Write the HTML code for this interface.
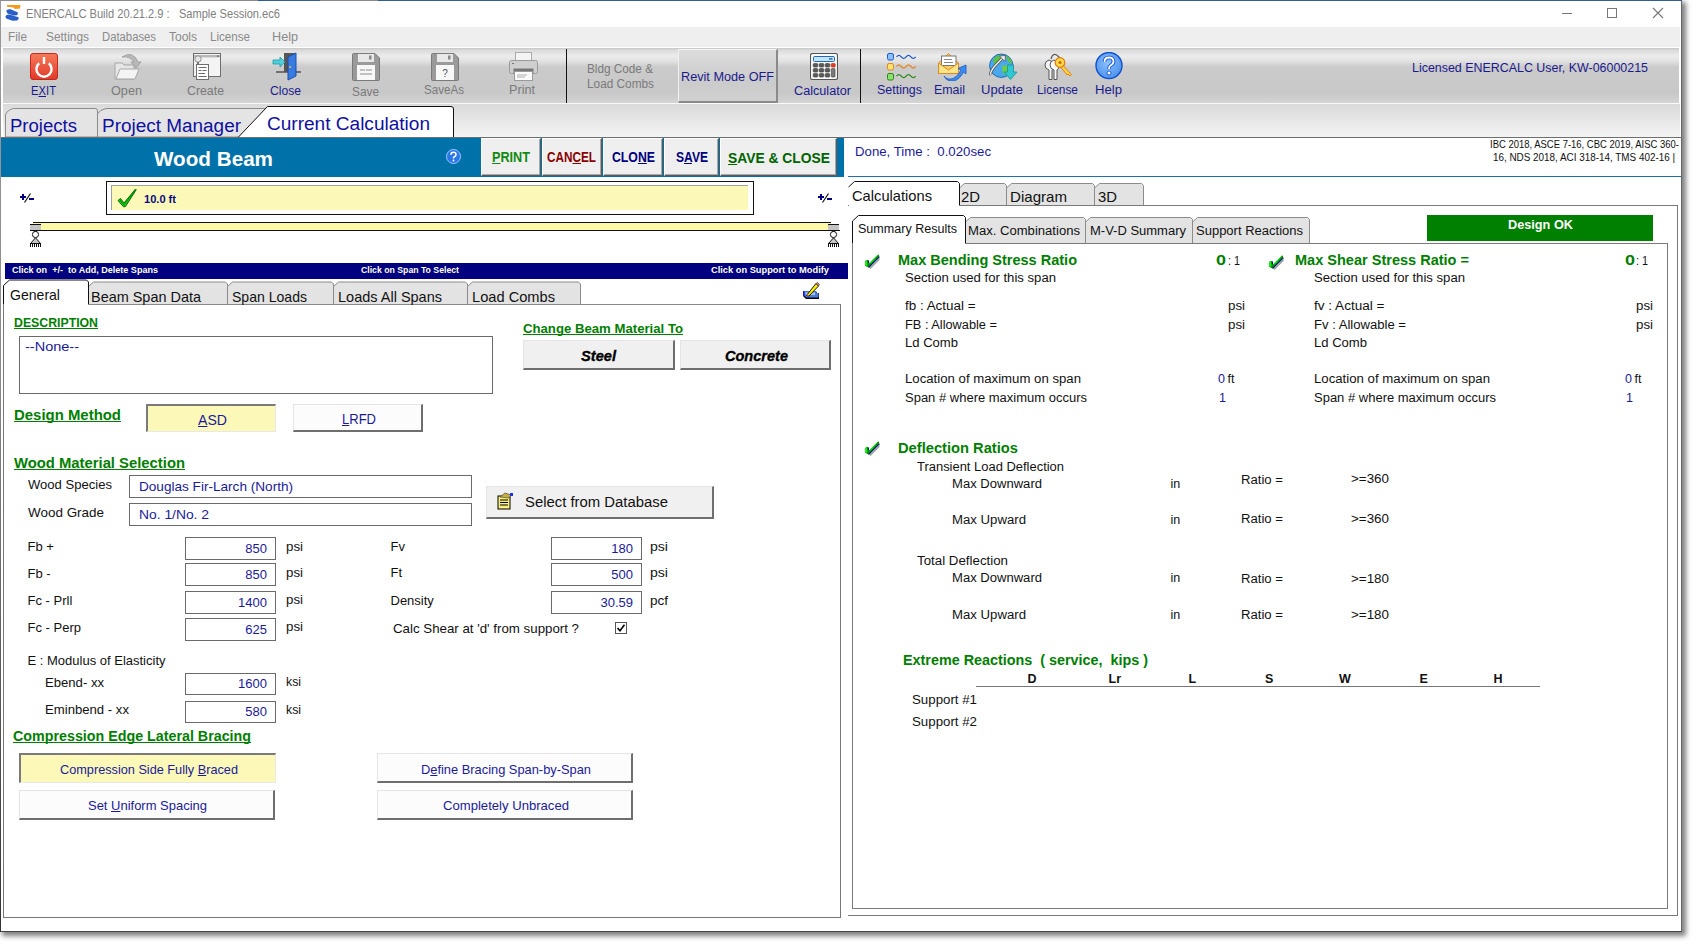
<!DOCTYPE html><html><head><meta charset="utf-8"><style>
html,body{margin:0;padding:0;width:1697px;height:948px;overflow:hidden;background:#fff;}
body{position:relative;font-family:"Liberation Sans", sans-serif;}
.t{position:absolute;white-space:pre;line-height:1;transform-origin:0 0;}
u{text-decoration:underline;text-decoration-skip-ink:none;}
</style></head><body>
<div style="position:absolute;left:0;top:0;width:1682px;height:932px;background:#fff;box-shadow:3px 3px 5px 1px rgba(0,0,0,0.5);"></div>
<div style="position:absolute;left:0;top:0;width:1681px;height:931px;border-right:1px solid #666;border-bottom:1px solid #444;"></div>
<div style="position:absolute;left:0;top:0;width:1px;height:932px;background:linear-gradient(#9a9a9a,#8a8a8a 40%,#333);"></div>
<div style="position:absolute;left:0px;top:0px;width:258px;height:1px;background:#8c8c8c;"></div>
<div style="position:absolute;left:258px;top:0px;width:62px;height:1px;background:#2d5f96;"></div>
<div style="position:absolute;left:320px;top:0px;width:58px;height:1px;background:#8c8c8c;"></div>
<div style="position:absolute;left:378px;top:0px;width:1304px;height:1px;background:#2d5f96;"></div>
<svg style="position:absolute;left:0;top:0" width="30" height="27" viewBox="0 0 30 27"><path d="M7 5 L20.5 5 L20 8.5 L15 9 L13.5 7.5 L7 6.8 Z" fill="#f49a18"/><path d="M6.2 11 Q7 8.6 10.5 9.3 L17.6 12.2 Q18.6 14.2 16.8 15.2 L13.5 15.6 L7.5 13.5 Z" fill="#2a5ec8"/><path d="M5.4 16.5 Q6.2 14.2 9.2 14.5 L18.6 17.2 Q19.2 19.6 17.2 20.6 L12.5 20.8 L6.2 18.6 Z" fill="#2a5ec8"/></svg>
<div style="position:absolute;left:1562px;top:13px;width:10px;height:1px;background:#777;"></div>
<div style="position:absolute;left:1607px;top:8px;width:9px;height:9px;border:1px solid #777;box-sizing:border-box;width:10px;height:10px;"></div>
<svg style="position:absolute;left:1652px;top:7px" width="12" height="12" viewBox="0 0 12 12"><path d="M1 1L11 11M11 1L1 11" stroke="#777" stroke-width="1.1"/></svg>
<div style="position:absolute;left:1px;top:27px;width:1679px;height:20px;background:#efefef;"></div>
<div style="position:absolute;left:3px;top:48px;width:1676px;height:55px;background:linear-gradient(#c6c6c6 0px,#dadada 2px,#ececec 8px,#e2e2e2 13px,#cbcbcb 19px,#c8c8c8 45px,#cecece 50px,#d4d4d4 55px);"></div>
<div style="position:absolute;left:3px;top:103px;width:1677px;height:1px;background:#fafafa;"></div>
<div style="position:absolute;left:3px;top:104px;width:1677px;height:33px;background:linear-gradient(#dadada,#f4f4f4);"></div>
<svg style="position:absolute;left:30px;top:53px" width="28" height="27" viewBox="0 0 28 27"><defs><linearGradient id="gx" x1="0" y1="0" x2="0" y2="1"><stop offset="0" stop-color="#f57a5a"/><stop offset="1" stop-color="#e03a2a"/></linearGradient></defs><rect x="0.5" y="0.5" width="27" height="26" rx="2.5" fill="url(#gx)" stroke="#c8281c"/><path d="M9.2 10.2 A7.6 7.6 0 1 0 18.8 10.2" fill="none" stroke="#fff" stroke-width="2.4"/><rect x="12.8" y="4" width="2.4" height="7" fill="#fff"/></svg>
<svg style="position:absolute;left:113px;top:52px" width="32" height="30" viewBox="0 0 32 30"><path d="M2 11 L9 11 L11 13 L21 13 L21 27 L2 27Z" fill="#e6e6e6" stroke="#a8a8a8"/><path d="M3 27 L7 17 L26 17 L22 27Z" fill="#f4f4f4" stroke="#a8a8a8"/><path d="M9 5 Q20 -2 25 10 L28 10 L23 16 L18 10 L21 10 Q17 4 9 5Z" fill="#b8b8b8" stroke="#999" stroke-width="0.8"/></svg>
<svg style="position:absolute;left:193px;top:53px" width="29" height="28" viewBox="0 0 29 28"><rect x="0.5" y="0.5" width="27" height="23" fill="#f4f4f4" stroke="#6e6e6e"/><rect x="1" y="2" width="26" height="2.4" fill="#b8b8b8"/><rect x="24" y="2.5" width="1.5" height="1.3" fill="#555"/><circle cx="5" cy="6" r="3.2" fill="#e6e6e6" stroke="#8a8a8a" stroke-width="0.9"/><rect x="4" y="9" width="2" height="2.5" fill="#777"/><rect x="3.5" y="11.5" width="12" height="15" fill="#fff" stroke="#6e6e6e"/><path d="M5.5 14.5h8M5.5 17.5h3M9.5 17.5h4M5.5 20.5h6.5M5.5 23.5h8" stroke="#6a6a6a" stroke-width="1"/></svg>
<svg style="position:absolute;left:272px;top:52px" width="30" height="30" viewBox="0 0 30 30"><path d="M4 20 L29 20" stroke="#333" stroke-width="1.2"/><rect x="12" y="1" width="12" height="19" fill="#555"/><path d="M16 5 L24 1 L24 24 L16 28Z" fill="#3a7be0" stroke="#1a4fb0" stroke-width="1"/><rect x="17.5" y="14" width="1.3" height="2" fill="#ffd040"/><path d="M1 8 L8 8 L8 5 L13 10 L8 15 L8 12 L1 12Z" fill="#4fd0d8" stroke="#1a9aa8" stroke-width="0.8"/></svg>
<svg style="position:absolute;left:352px;top:53px" width="28" height="28" viewBox="0 0 28 28"><path d="M0.5 1.5 Q0.5 0.5 1.5 0.5 L23 0.5 L27.5 5 L27.5 26.5 Q27.5 27.5 26.5 27.5 L1.5 27.5 Q0.5 27.5 0.5 26.5Z" fill="#9a9a9a" stroke="#7a7a7a"/><rect x="6" y="1" width="16" height="8" fill="#e8e8e8"/><rect x="17" y="2.5" width="2.5" height="4" fill="#888"/><rect x="5" y="12" width="18" height="15" fill="#f8f8f8"/><path d="M8 17h5M14 17h6M8 21h12" stroke="#8a8a8a" stroke-width="1"/></svg>
<svg style="position:absolute;left:431px;top:53px" width="28" height="28" viewBox="0 0 28 28"><path d="M0.5 1.5 Q0.5 0.5 1.5 0.5 L23 0.5 L27.5 5 L27.5 26.5 Q27.5 27.5 26.5 27.5 L1.5 27.5 Q0.5 27.5 0.5 26.5Z" fill="#9a9a9a" stroke="#7a7a7a"/><rect x="6" y="1" width="16" height="8" fill="#e8e8e8"/><rect x="17" y="2.5" width="2.5" height="4" fill="#888"/><rect x="5" y="12" width="18" height="15" fill="#f8f8f8"/><text x="14" y="24" font-size="10" text-anchor="middle" fill="#555" font-family="Liberation Sans">?</text></svg>
<svg style="position:absolute;left:509px;top:52px" width="29" height="29" viewBox="0 0 29 29"><rect x="6.5" y="0.5" width="16" height="9" fill="#f4f4f4" stroke="#aaa"/><rect x="0.5" y="8.5" width="28" height="13" rx="2" fill="#cfcfcf" stroke="#9a9a9a"/><rect x="3" y="11" width="2" height="1" fill="#777"/><rect x="4.5" y="16.5" width="20" height="5" fill="#777" /><rect x="5.5" y="19.5" width="18" height="9" fill="#fafafa" stroke="#999"/><path d="M8 23h10M8 25h8" stroke="#999" stroke-width="0.8"/></svg>
<div style="position:absolute;left:566px;top:49px;width:1px;height:54px;background:#111;"></div>
<div style="position:absolute;left:678px;top:49px;width:100px;height:54px;box-sizing:border-box;background:linear-gradient(#dcdcdc,#cbcbcb 60%,#d0d0d0);border:1px solid #9a9a9a;border-top-color:#f4f4f4;border-left-color:#f0f0f0;border-right:2px solid #8a8a8a;border-bottom:2px solid #8a8a8a;"></div>
<svg style="position:absolute;left:810px;top:53px" width="28" height="28" viewBox="0 0 28 28"><rect x="0.5" y="0.5" width="27" height="26" rx="2" fill="#fafafa" stroke="#555" stroke-width="1.1"/><rect x="3.5" y="3.5" width="21" height="5" rx="1" fill="#c4e4fa" stroke="#1a6ac0" stroke-width="1"/><rect x="19" y="5.3" width="3.5" height="1.2" fill="#1a4a90"/><rect x="3.2" y="10.5" width="4.6" height="3.6" rx="1" fill="#5a5a5a" stroke="#3a3a3a" stroke-width="0.6"/><rect x="9.2" y="10.5" width="4.6" height="3.6" rx="1" fill="#5a5a5a" stroke="#3a3a3a" stroke-width="0.6"/><rect x="15.2" y="10.5" width="4.6" height="3.6" rx="1" fill="#5a5a5a" stroke="#3a3a3a" stroke-width="0.6"/><rect x="3.2" y="15.5" width="4.6" height="3.6" rx="1" fill="#5a5a5a" stroke="#3a3a3a" stroke-width="0.6"/><rect x="9.2" y="15.5" width="4.6" height="3.6" rx="1" fill="#5a5a5a" stroke="#3a3a3a" stroke-width="0.6"/><rect x="15.2" y="15.5" width="4.6" height="3.6" rx="1" fill="#5a5a5a" stroke="#3a3a3a" stroke-width="0.6"/><rect x="3.2" y="20.5" width="4.6" height="3.6" rx="1" fill="#5a5a5a" stroke="#3a3a3a" stroke-width="0.6"/><rect x="9.2" y="20.5" width="4.6" height="3.6" rx="1" fill="#5a5a5a" stroke="#3a3a3a" stroke-width="0.6"/><rect x="15.2" y="20.5" width="4.6" height="3.6" rx="1" fill="#5a5a5a" stroke="#3a3a3a" stroke-width="0.6"/><rect x="21.2" y="10.5" width="4" height="3.6" rx="0.8" fill="#e83a20" stroke="#b02010" stroke-width="0.6"/><rect x="21.4" y="15.5" width="3.6" height="8.6" rx="0.8" fill="#7a7a7a" stroke="#3a3a3a" stroke-width="0.6"/></svg>
<div style="position:absolute;left:860px;top:49px;width:1px;height:54px;background:#111;"></div>
<svg style="position:absolute;left:886px;top:52px" width="32" height="29" viewBox="0 0 32 29"><rect x="1.5" y="1.5" width="6" height="6.5" rx="1.5" fill="#8cc0ff" stroke="#1a5ad0" stroke-width="1"/><rect x="1.5" y="11.5" width="6" height="6.5" rx="1.5" fill="#ffe070" stroke="#e08a20" stroke-width="1"/><rect x="1.5" y="21.5" width="6" height="6.5" rx="1.5" fill="#8ee070" stroke="#2a8a1a" stroke-width="1"/><g transform="translate(10.5,0)"><path d="M0 4.8 q2.4 -3 4.8 0 t4.8 0 t4.8 0 t4.8 0" fill="none" stroke="#1a5ad0" stroke-width="1.3"/><path d="M0 14.5 q2.4 -3 4.8 0 t4.8 0 t4.8 0 t4.8 0" fill="none" stroke="#e08a30" stroke-width="1.3"/><path d="M0 24.2 q2.4 -3 4.8 0 t4.8 0 t4.8 0 t4.8 0" fill="none" stroke="#2a8a1a" stroke-width="1.3"/></g></svg>
<svg style="position:absolute;left:936px;top:51px" width="32" height="30" viewBox="0 0 32 30"><path d="M2.5 12 L12.5 2.5 L22.5 12 L22.5 22.5 L2.5 22.5Z" fill="#fbd060" stroke="#e08a20" stroke-width="1"/><rect x="5.5" y="5" width="14.5" height="9.5" fill="#fff" stroke="#777" stroke-width="1"/><path d="M8 8.5h8M8 11.5h9" stroke="#888" stroke-width="1"/><path d="M2.5 12 L12.5 19 L22.5 12 L22.5 22.5 L2.5 22.5Z" fill="#ffe48a" stroke="#e08a20" stroke-width="1"/><path d="M8 25 Q12 30 18 27 Q22 25 25 19 L22 17.5 L30 14 L30 23 L27.5 21 Q24 28 18 30 Q11 31 8 25Z" fill="#3a8af0" stroke="#1a5ac0" stroke-width="0.8"/></svg>
<svg style="position:absolute;left:988px;top:52px" width="30" height="30" viewBox="0 0 30 30"><circle cx="13.3" cy="13.7" r="11.7" fill="#4aa8ec" stroke="#1a6ab8" stroke-width="1"/><path d="M5 8 Q8 3 13 3 L14 6 L11 9 L12 12 L8 13 L6 11Z" fill="#5cc040"/><path d="M18 3.5 Q23 6 24.5 11 L21 11 L19 7Z" fill="#5cc040"/><path d="M14 14 L19 13 L21 17 L17 23 L15 21Z" fill="#6ad040"/><path d="M3 23 Q1.5 21 6 15 L15 5.5" fill="none" stroke="#555" stroke-width="3"/><path d="M3 23 Q1.5 21 6 15 L15 5.5" fill="none" stroke="#f0f0f0" stroke-width="1.3"/><path d="M11.5 4 L17.5 3.5 L17 9.5Z" fill="#f0f0f0" stroke="#555" stroke-width="0.8"/><path d="M19.5 13 L25.5 13 L25.5 20 L29 20 L22.5 27.5 L16 20 L19.5 20Z" fill="#30c8d0" stroke="#1890a0" stroke-width="0.8"/></svg>
<svg style="position:absolute;left:1044px;top:52px" width="29" height="29" viewBox="0 0 29 29"><path d="M7 7 Q9 -1 15 5 L17 9" fill="none" stroke="#555" stroke-width="1.2"/><path d="M5 8 Q1 9 1 13 Q1 17 5 18 L5 27.5 L8 27.5 L8 18 Q10 17 10 13 Q9 9 5 8Z" fill="#f4f4f4" stroke="#555" stroke-width="1"/><path d="M10 8 Q6 9 6 13 Q6 17 10 18 L10 27.5 L13 27.5 L13 18 Q15 17 15 13 Q14 9 10 8Z" fill="#f8f8f8" stroke="#555" stroke-width="1"/><circle cx="16" cy="10.5" r="4.8" fill="#ffd848" stroke="#e07a10" stroke-width="1.2"/><circle cx="16" cy="10.5" r="1.6" fill="#c86a10"/><path d="M19 13.5 L27.5 22.5 L26 24 L24 22 L23 23 L17.5 16Z" fill="#ffd040" stroke="#e07a10" stroke-width="0.9"/></svg>
<svg style="position:absolute;left:1095px;top:52px" width="29" height="28" viewBox="0 0 29 28"><defs><radialGradient id="gh" cx="0.45" cy="0.4" r="0.65"><stop offset="0" stop-color="#8cc0ff"/><stop offset="1" stop-color="#4a90e8"/></radialGradient></defs><circle cx="14" cy="13.5" r="13" fill="url(#gh)" stroke="#1050d0" stroke-width="1.4"/><path d="M9.5 10 Q9.5 5.5 14 5.5 Q18.5 5.5 18.5 9.5 Q18.5 12 15.5 13.5 Q14 14.3 14 17" fill="none" stroke="#1050d0" stroke-width="3.6"/><path d="M9.5 10 Q9.5 5.5 14 5.5 Q18.5 5.5 18.5 9.5 Q18.5 12 15.5 13.5 Q14 14.3 14 17" fill="none" stroke="#fff" stroke-width="1.8"/><circle cx="14" cy="21" r="2" fill="#fff" stroke="#1050d0" stroke-width="0.9"/></svg>
<svg style="position:absolute;left:0;top:104px" width="460" height="34" viewBox="0 0 460 34"><path d="M5.5 33 L5.5 11 Q7 6 13.5 4.5 L95 4.5 Q97.5 4.5 97.5 7 L97.5 33Z" fill="#e4e4e4" stroke="#8a8a8a"/><path d="M97.5 33 L97.5 10 Q100 5.5 106 4.5 L266 4.5 L266 33Z" fill="#e4e4e4" stroke="#8a8a8a"/><path d="M238 33.5 L267.5 2.5 L451 2.5 Q453.5 2.5 453.5 5 L453.5 33.5" fill="#fff" stroke="#111"/></svg>
<div style="position:absolute;left:1px;top:137px;width:1680px;height:1px;background:#6e6e6e;"></div>
<div style="position:absolute;left:1px;top:138px;width:843px;height:39px;background:#0072aa;"></div>
<svg style="position:absolute;left:446px;top:149px" width="15" height="15" viewBox="0 0 15 15"><circle cx="7.5" cy="7.5" r="7" fill="#2a78e8" stroke="#9cc8ff" stroke-width="1"/><path d="M5 5.8 Q5 3.3 7.5 3.3 Q10 3.3 10 5.5 Q10 7 8.3 7.8 Q7.5 8.3 7.5 9.5" fill="none" stroke="#fff" stroke-width="1.6"/><circle cx="7.5" cy="11.6" r="1" fill="#fff"/></svg>
<div style="position:absolute;left:481px;top:138px;width:60px;height:38px;box-sizing:border-box;background:#efefef;border-top:1px solid #fff;border-left:1px solid #fff;border-right:1px solid #5a5a5a;border-bottom:1px solid #5a5a5a;box-shadow:inset -1px -1px 0 #a8a8a8;"></div>
<div style="position:absolute;left:542px;top:138px;width:60px;height:38px;box-sizing:border-box;background:#efefef;border-top:1px solid #fff;border-left:1px solid #fff;border-right:1px solid #5a5a5a;border-bottom:1px solid #5a5a5a;box-shadow:inset -1px -1px 0 #a8a8a8;"></div>
<div style="position:absolute;left:603px;top:138px;width:60px;height:38px;box-sizing:border-box;background:#efefef;border-top:1px solid #fff;border-left:1px solid #fff;border-right:1px solid #5a5a5a;border-bottom:1px solid #5a5a5a;box-shadow:inset -1px -1px 0 #a8a8a8;"></div>
<div style="position:absolute;left:664px;top:138px;width:55px;height:38px;box-sizing:border-box;background:#efefef;border-top:1px solid #fff;border-left:1px solid #fff;border-right:1px solid #5a5a5a;border-bottom:1px solid #5a5a5a;box-shadow:inset -1px -1px 0 #a8a8a8;"></div>
<div style="position:absolute;left:720px;top:138px;width:117px;height:38px;box-sizing:border-box;background:#efefef;border-top:1px solid #fff;border-left:1px solid #fff;border-right:1px solid #5a5a5a;border-bottom:1px solid #5a5a5a;box-shadow:inset -1px -1px 0 #a8a8a8;"></div>
<div style="position:absolute;left:106px;top:181px;width:648px;height:34px;box-sizing:border-box;border:1.5px solid #111;background:#fff;"></div>
<div style="position:absolute;left:111px;top:185px;width:637px;height:25px;box-sizing:border-box;border-left:1px solid #a0a0a0;border-top:1px solid #a0a0a0;background:#fbf8b8;"></div>
<svg style="position:absolute;left:117px;top:188px" width="20" height="20" viewBox="0 0 20 20"><path d="M1 12.5 L3.5 10.5 L7 15 L18.5 1 L19.2 1.8 L8.5 18.5 L6.5 18.8 Z" fill="#10d010" stroke="#005a00" stroke-width="0.9"/><path d="M3 12 L7 17 L18 2.5" fill="none" stroke="#0a8a0a" stroke-width="0.8"/></svg>
<svg style="position:absolute;left:20px;top:192px" width="16" height="12" viewBox="0 0 16 12"><g shape-rendering="crispEdges" fill="#000080"><rect x="0" y="4" width="6" height="2"/><rect x="2" y="2" width="2" height="6"/><rect x="9" y="6" width="5" height="2"/></g><path d="M4.5 10.5 L10.5 1.5" stroke="#000" stroke-width="1.1"/></svg>
<svg style="position:absolute;left:818px;top:192px" width="16" height="12" viewBox="0 0 16 12"><g shape-rendering="crispEdges" fill="#000080"><rect x="0" y="4" width="6" height="2"/><rect x="2" y="2" width="2" height="6"/><rect x="9" y="6" width="5" height="2"/></g><path d="M4.5 10.5 L10.5 1.5" stroke="#000" stroke-width="1.1"/></svg>
<div style="position:absolute;left:33px;top:222px;width:798px;height:9px;background:#fffaa8;"></div>
<div style="position:absolute;left:33px;top:222px;width:798px;height:1px;background:#111;"></div>
<div style="position:absolute;left:30px;top:230px;width:810px;height:1px;background:#111;"></div>
<svg style="position:absolute;left:30px;top:222px" width="12" height="26" viewBox="0 0 12 26"><g shape-rendering="crispEdges"><rect x="0" y="2" width="11" height="1" fill="#111"/><rect x="0" y="3" width="11" height="5" fill="#c4c4c4"/><rect x="0" y="8" width="11" height="1" fill="#111"/><rect x="4" y="9" width="3" height="1" fill="#111"/></g><circle cx="5.5" cy="12.5" r="3.1" fill="#fff" stroke="#111" stroke-width="1"/><path d="M5.5 15.8 L0.5 21.5 L10.5 21.5 Z" fill="#c8c8c8" stroke="#111" stroke-width="1"/><g shape-rendering="crispEdges" fill="#111"><rect x="0" y="21" width="11" height="1"/><rect x="0" y="21" width="1" height="4"/><rect x="2" y="21" width="1" height="4"/><rect x="4" y="21" width="1" height="4"/><rect x="6" y="21" width="1" height="4"/><rect x="8" y="21" width="1" height="4"/><rect x="10" y="21" width="1" height="4"/></g></svg>
<svg style="position:absolute;left:828px;top:222px" width="12" height="26" viewBox="0 0 12 26"><g shape-rendering="crispEdges"><rect x="0" y="2" width="11" height="1" fill="#111"/><rect x="0" y="3" width="11" height="5" fill="#c4c4c4"/><rect x="0" y="8" width="11" height="1" fill="#111"/><rect x="4" y="9" width="3" height="1" fill="#111"/></g><circle cx="5.5" cy="12.5" r="3.1" fill="#fff" stroke="#111" stroke-width="1"/><path d="M5.5 15.8 L0.5 21.5 L10.5 21.5 Z" fill="#c8c8c8" stroke="#111" stroke-width="1"/><g shape-rendering="crispEdges" fill="#111"><rect x="0" y="21" width="11" height="1"/><rect x="0" y="21" width="1" height="4"/><rect x="2" y="21" width="1" height="4"/><rect x="4" y="21" width="1" height="4"/><rect x="6" y="21" width="1" height="4"/><rect x="8" y="21" width="1" height="4"/><rect x="10" y="21" width="1" height="4"/></g></svg>
<div style="position:absolute;left:5px;top:263px;width:843px;height:16px;background:#000080;"></div>
<svg style="position:absolute;left:0;top:0" width="1697" height="948"><path d="M88.5 304 L88.5 286.5 L93.5 282.0 L225.5 282.0 L227.5 284.0 L227.5 304 Z" fill="#e3e3e3" stroke="none"/><path d="M88.5 304 L88.5 286.5 L93.5 282.0 L225.5 282.0 L227.5 284.0 L227.5 304" fill="none" stroke="#8c8c8c" stroke-width="1"/><path d="M227.5 304 L227.5 286.5 L232.5 282.0 L331.5 282.0 L333.5 284.0 L333.5 304 Z" fill="#e3e3e3" stroke="none"/><path d="M227.5 304 L227.5 286.5 L232.5 282.0 L331.5 282.0 L333.5 284.0 L333.5 304" fill="none" stroke="#8c8c8c" stroke-width="1"/><path d="M333.5 304 L333.5 286.5 L338.5 282.0 L465.5 282.0 L467.5 284.0 L467.5 304 Z" fill="#e3e3e3" stroke="none"/><path d="M333.5 304 L333.5 286.5 L338.5 282.0 L465.5 282.0 L467.5 284.0 L467.5 304" fill="none" stroke="#8c8c8c" stroke-width="1"/><path d="M467.5 304 L467.5 286.5 L472.5 282.0 L578.5 282.0 L580.5 284.0 L580.5 304 Z" fill="#e3e3e3" stroke="none"/><path d="M467.5 304 L467.5 286.5 L472.5 282.0 L578.5 282.0 L580.5 284.0 L580.5 304" fill="none" stroke="#8c8c8c" stroke-width="1"/><path d="M3.5 304 L3.5 285.5 L9.5 280.0 L86.5 280.0 L88.5 282.0 L88.5 304 Z" fill="#fff" stroke="none"/><path d="M3.5 304 L3.5 285.5 L9.5 280.0 L86.5 280.0 L88.5 282.0 L88.5 304" fill="none" stroke="#111" stroke-width="1"/></svg>
<div style="position:absolute;left:3px;top:304px;width:838px;height:614px;box-sizing:border-box;border:1px solid #777;border-top-color:#8a8a8a;"></div>
<div style="position:absolute;left:4px;top:304px;width:84px;height:2px;background:#fff;"></div>
<svg style="position:absolute;left:802px;top:282px" width="20" height="18" viewBox="0 0 20 18"><path d="M1 9 L1 14 L4 17 L17 17 L17 11 L15 11 L14 9 Z" fill="#000"/><path d="M1.5 9 L13.5 9 L14.5 11 L16.5 11 L16.5 15.5 L4.5 15.5 L1.5 13 Z" fill="#4a7ae8"/><rect x="1" y="9" width="1.5" height="5" fill="#1a10e0"/><path d="M3 10.5 L13 10.5 L13 13 L4 13Z" fill="#a8c8d8"/><path d="M4.5 13.5 L7 14 L16.5 4 L14 1.5 Z" fill="#ffee00" stroke="#000" stroke-width="0.9"/><path d="M14 1.5 L15.5 0.5 L17.5 2.5 L16.5 4 Z" fill="#f08080" stroke="#333" stroke-width="0.7"/><path d="M4.5 13.5 L7 14 L6 12Z" fill="#f08020"/></svg>
<div style="position:absolute;left:19px;top:336px;width:474px;height:58px;box-sizing:border-box;border:1px solid #6a6a6a;background:#fff;"></div>
<div style="position:absolute;left:146px;top:404px;width:130px;height:28px;box-sizing:border-box;background:#fbf8b8;border-top:2px solid #7a7a7a;border-left:2px solid #7a7a7a;border-right:1px solid #e8e8e8;border-bottom:1px solid #e8e8e8;"></div>
<div style="position:absolute;left:293px;top:404px;width:130px;height:28px;box-sizing:border-box;background:#fcfcfc;border-top:1px solid #e4e4e4;border-left:1px solid #e4e4e4;border-right:2px solid #6e6e6e;border-bottom:2px solid #6e6e6e;"></div>
<div style="position:absolute;left:523px;top:340px;width:152px;height:30px;box-sizing:border-box;background:#f0f0f0;border-top:1px solid #e4e4e4;border-left:1px solid #e4e4e4;border-right:2px solid #6e6e6e;border-bottom:2px solid #6e6e6e;"></div>
<div style="position:absolute;left:680px;top:340px;width:151px;height:30px;box-sizing:border-box;background:#f0f0f0;border-top:1px solid #e4e4e4;border-left:1px solid #e4e4e4;border-right:2px solid #6e6e6e;border-bottom:2px solid #6e6e6e;"></div>
<div style="position:absolute;left:129px;top:475px;width:343px;height:23px;box-sizing:border-box;border:1px solid #6a6a6a;"></div>
<div style="position:absolute;left:129px;top:503px;width:343px;height:23px;box-sizing:border-box;border:1px solid #6a6a6a;"></div>
<div style="position:absolute;left:486px;top:486px;width:228px;height:33px;box-sizing:border-box;background:#f0f0f0;border-top:1px solid #e4e4e4;border-left:1px solid #e4e4e4;border-right:2px solid #6e6e6e;border-bottom:2px solid #6e6e6e;"></div>
<svg style="position:absolute;left:497px;top:492px" width="17" height="18" viewBox="0 0 17 18"><rect x="1" y="4" width="12" height="13" fill="#f8f080" stroke="#000" stroke-width="1"/><path d="M3 8h8M3 10.5h8M3 13h8" stroke="#000" stroke-width="1"/><path d="M3 5 L8 1 L14 3 L12 6Z" fill="#c8b040" stroke="#333" stroke-width="0.6"/><rect x="13" y="1" width="3" height="3" fill="#2030f0"/></svg>
<div style="position:absolute;left:185px;top:537px;width:91px;height:23px;box-sizing:border-box;border:1px solid #6a6a6a;"></div>
<div style="position:absolute;left:185px;top:563px;width:91px;height:23px;box-sizing:border-box;border:1px solid #6a6a6a;"></div>
<div style="position:absolute;left:185px;top:591px;width:91px;height:23px;box-sizing:border-box;border:1px solid #6a6a6a;"></div>
<div style="position:absolute;left:185px;top:618px;width:91px;height:23px;box-sizing:border-box;border:1px solid #6a6a6a;"></div>
<div style="position:absolute;left:185px;top:673px;width:91px;height:22px;box-sizing:border-box;border:1px solid #6a6a6a;"></div>
<div style="position:absolute;left:185px;top:701px;width:91px;height:22px;box-sizing:border-box;border:1px solid #6a6a6a;"></div>
<div style="position:absolute;left:551px;top:537px;width:91px;height:23px;box-sizing:border-box;border:1px solid #6a6a6a;"></div>
<div style="position:absolute;left:551px;top:563px;width:91px;height:23px;box-sizing:border-box;border:1px solid #6a6a6a;"></div>
<div style="position:absolute;left:551px;top:591px;width:91px;height:23px;box-sizing:border-box;border:1px solid #6a6a6a;"></div>
<svg style="position:absolute;left:615px;top:622px" width="12" height="12" viewBox="0 0 12 12"><rect x="0.5" y="0.5" width="11" height="11" fill="#fff" stroke="#555"/><path d="M2.5 6 L5 8.8 L9.5 2.8" fill="none" stroke="#000" stroke-width="1.6"/></svg>
<div style="position:absolute;left:19px;top:753px;width:257px;height:30px;box-sizing:border-box;background:#fbf8b8;border-top:2px solid #7a7a7a;border-left:2px solid #7a7a7a;border-right:1px solid #e8e8e8;border-bottom:1px solid #e8e8e8;"></div>
<div style="position:absolute;left:19px;top:790px;width:256px;height:30px;box-sizing:border-box;background:#fcfcfc;border-top:1px solid #e4e4e4;border-left:1px solid #e4e4e4;border-right:2px solid #6e6e6e;border-bottom:2px solid #6e6e6e;"></div>
<div style="position:absolute;left:377px;top:753px;width:256px;height:30px;box-sizing:border-box;background:#fcfcfc;border-top:1px solid #e4e4e4;border-left:1px solid #e4e4e4;border-right:2px solid #6e6e6e;border-bottom:2px solid #6e6e6e;"></div>
<div style="position:absolute;left:377px;top:790px;width:256px;height:30px;box-sizing:border-box;background:#fcfcfc;border-top:1px solid #e4e4e4;border-left:1px solid #e4e4e4;border-right:2px solid #6e6e6e;border-bottom:2px solid #6e6e6e;"></div>
<div style="position:absolute;left:848px;top:176px;width:833px;height:1px;background:#1f6fa8;"></div>
<div style="position:absolute;left:848px;top:205px;width:830px;height:711px;box-sizing:border-box;border:1px solid #7a7a7a;border-left:none;"></div>
<svg style="position:absolute;left:0;top:0" width="1697" height="948"><path d="M959.5 205 L959.5 188 L964.5 183.5 L1004.5 183.5 L1006.5 185.5 L1006.5 205 Z" fill="#e3e3e3" stroke="none"/><path d="M959.5 205 L959.5 188 L964.5 183.5 L1004.5 183.5 L1006.5 185.5 L1006.5 205" fill="none" stroke="#8c8c8c" stroke-width="1"/><path d="M1006.5 205 L1006.5 188 L1011.5 183.5 L1092.5 183.5 L1094.5 185.5 L1094.5 205 Z" fill="#e3e3e3" stroke="none"/><path d="M1006.5 205 L1006.5 188 L1011.5 183.5 L1092.5 183.5 L1094.5 185.5 L1094.5 205" fill="none" stroke="#8c8c8c" stroke-width="1"/><path d="M1094.5 205 L1094.5 188 L1099.5 183.5 L1141.5 183.5 L1143.5 185.5 L1143.5 205 Z" fill="#e3e3e3" stroke="none"/><path d="M1094.5 205 L1094.5 188 L1099.5 183.5 L1141.5 183.5 L1143.5 185.5 L1143.5 205" fill="none" stroke="#8c8c8c" stroke-width="1"/><path d="M848.5 205 L848.5 187 L854.5 181.5 L957.5 181.5 L959.5 183.5 L959.5 205 Z" fill="#fff" stroke="none"/><path d="M848.5 187 L854.5 181.5 L957.5 181.5 L959.5 183.5 L959.5 205" fill="none" stroke="#111" stroke-width="1"/></svg>
<div style="position:absolute;left:849px;top:205px;width:110px;height:2px;background:#fff;"></div>
<div style="position:absolute;left:852px;top:243px;width:816px;height:666px;box-sizing:border-box;border:1px solid #7a7a7a;"></div>
<svg style="position:absolute;left:0;top:0" width="1697" height="948"><path d="M965.5 243 L965.5 222 L970.5 217.5 L1083.5 217.5 L1085.5 219.5 L1085.5 243 Z" fill="#e3e3e3" stroke="none"/><path d="M965.5 243 L965.5 222 L970.5 217.5 L1083.5 217.5 L1085.5 219.5 L1085.5 243" fill="none" stroke="#8c8c8c" stroke-width="1"/><path d="M1085.5 243 L1085.5 222 L1090.5 217.5 L1190.5 217.5 L1192.5 219.5 L1192.5 243 Z" fill="#e3e3e3" stroke="none"/><path d="M1085.5 243 L1085.5 222 L1090.5 217.5 L1190.5 217.5 L1192.5 219.5 L1192.5 243" fill="none" stroke="#8c8c8c" stroke-width="1"/><path d="M1192.5 243 L1192.5 222 L1197.5 217.5 L1307.5 217.5 L1309.5 219.5 L1309.5 243 Z" fill="#e3e3e3" stroke="none"/><path d="M1192.5 243 L1192.5 222 L1197.5 217.5 L1307.5 217.5 L1309.5 219.5 L1309.5 243" fill="none" stroke="#8c8c8c" stroke-width="1"/><path d="M852.5 243 L852.5 221 L858.5 215.5 L963.5 215.5 L965.5 217.5 L965.5 243 Z" fill="#fff" stroke="none"/><path d="M852.5 243 L852.5 221 L858.5 215.5 L963.5 215.5 L965.5 217.5 L965.5 243" fill="none" stroke="#111" stroke-width="1"/></svg>
<div style="position:absolute;left:853px;top:243px;width:112px;height:2px;background:#fff;"></div>
<div style="position:absolute;left:1427px;top:215px;width:226px;height:26px;background:#008000;"></div>
<svg style="position:absolute;left:860px;top:250px" width="24" height="22" viewBox="0 0 24 22"><path d="M9.5 18 L19.5 8 L19.5 10 L10.5 19 Z" fill="#9a9a9a"/><path d="M5 11 L7 10 L8.8 10.5 L9 13.5 L17.5 5 L18.6 4.6 L19.4 6.5 L9.5 17.6 L8.5 17.6 L5 15.8 Z" fill="#0a8a0a"/><path d="M5 11 L7 10 L7.5 15.5 L5 15.8 Z" fill="#12f012"/><path d="M9.5 13 L17.8 4.8 L18.6 4.6 L11 13.5 Z" fill="#12e812"/><path d="M8.2 10.5 L8.6 13" stroke="#0a0a90" stroke-width="1.1"/><path d="M8.6 17.4 L19.4 6.8" stroke="#0a0a90" stroke-width="1.1"/></svg>
<svg style="position:absolute;left:1264px;top:251px" width="24" height="22" viewBox="0 0 24 22"><path d="M9.5 18 L19.5 8 L19.5 10 L10.5 19 Z" fill="#9a9a9a"/><path d="M5 11 L7 10 L8.8 10.5 L9 13.5 L17.5 5 L18.6 4.6 L19.4 6.5 L9.5 17.6 L8.5 17.6 L5 15.8 Z" fill="#0a8a0a"/><path d="M5 11 L7 10 L7.5 15.5 L5 15.8 Z" fill="#12f012"/><path d="M9.5 13 L17.8 4.8 L18.6 4.6 L11 13.5 Z" fill="#12e812"/><path d="M8.2 10.5 L8.6 13" stroke="#0a0a90" stroke-width="1.1"/><path d="M8.6 17.4 L19.4 6.8" stroke="#0a0a90" stroke-width="1.1"/></svg>
<svg style="position:absolute;left:860px;top:437px" width="24" height="22" viewBox="0 0 24 22"><path d="M9.5 18 L19.5 8 L19.5 10 L10.5 19 Z" fill="#9a9a9a"/><path d="M5 11 L7 10 L8.8 10.5 L9 13.5 L17.5 5 L18.6 4.6 L19.4 6.5 L9.5 17.6 L8.5 17.6 L5 15.8 Z" fill="#0a8a0a"/><path d="M5 11 L7 10 L7.5 15.5 L5 15.8 Z" fill="#12f012"/><path d="M9.5 13 L17.8 4.8 L18.6 4.6 L11 13.5 Z" fill="#12e812"/><path d="M8.2 10.5 L8.6 13" stroke="#0a0a90" stroke-width="1.1"/><path d="M8.6 17.4 L19.4 6.8" stroke="#0a0a90" stroke-width="1.1"/></svg>
<div style="position:absolute;left:976px;top:686px;width:564px;height:1px;background:#777;"></div>
<div class="t" id="t0" style="left:26px;top:7.00px;font-size:13px;color:#808080;transform:scaleX(0.8532);">ENERCALC Build 20.21.2.9 :   Sample Session.ec6</div>
<div class="t" id="t1" style="left:8px;top:30.84px;font-size:12px;color:#8a8a8a;transform:scaleX(0.9822);">File</div>
<div class="t" id="t2" style="left:46px;top:30.84px;font-size:12px;color:#8a8a8a;transform:scaleX(0.9917);">Settings</div>
<div class="t" id="t3" style="left:102px;top:30.84px;font-size:12px;color:#8a8a8a;transform:scaleX(0.9412);">Databases</div>
<div class="t" id="t4" style="left:169px;top:30.84px;font-size:12px;color:#8a8a8a;">Tools</div>
<div class="t" id="t5" style="left:210px;top:30.84px;font-size:12px;color:#8a8a8a;transform:scaleX(0.9668);">License</div>
<div class="t" id="t6" style="left:272px;top:30.84px;font-size:12px;color:#8a8a8a;transform:scaleX(1.0532);">Help</div>
<div class="t" id="t7" style="left:31px;top:84.84px;font-size:12px;color:#1a1a8c;transform:scaleX(0.9362);">E<u>X</u>IT</div>
<div class="t" id="t8" style="left:111px;top:84.84px;font-size:12px;color:#7a7a7a;transform:scaleX(1.0559);">Open</div>
<div class="t" id="t9" style="left:187px;top:84.84px;font-size:12px;color:#7a7a7a;transform:scaleX(1.0269);">Create</div>
<div class="t" id="t10" style="left:270px;top:84.84px;font-size:12px;color:#1a1a8c;transform:scaleX(1.0102);">Close</div>
<div class="t" id="t11" style="left:352px;top:85.84px;font-size:12px;color:#7a7a7a;transform:scaleX(0.9869);">Save</div>
<div class="t" id="t12" style="left:424px;top:83.84px;font-size:12px;color:#7a7a7a;transform:scaleX(0.9671);">SaveAs</div>
<div class="t" id="t13" style="left:509px;top:83.84px;font-size:12px;color:#7a7a7a;transform:scaleX(1.0532);">Print</div>
<div class="t" id="t14" style="left:587px;top:62.84px;font-size:12px;color:#7a7a7a;transform:scaleX(0.9794);">Bldg Code &amp;</div>
<div class="t" id="t15" style="left:587px;top:77.84px;font-size:12px;color:#7a7a7a;transform:scaleX(0.9846);">Load Combs</div>
<div class="t" id="t16" style="left:681px;top:70.00px;font-size:13px;color:#1a1a8c;transform:scaleX(0.9753);">Revit Mode OFF</div>
<div class="t" id="t17" style="left:794px;top:84.84px;font-size:12px;color:#1a1a8c;transform:scaleX(1.0549);">Calculator</div>
<div class="t" id="t18" style="left:877px;top:83.84px;font-size:12px;color:#1a1a8c;transform:scaleX(1.0378);">Settings</div>
<div class="t" id="t19" style="left:934px;top:83.84px;font-size:12px;color:#1a1a8c;transform:scaleX(1.0328);">Email</div>
<div class="t" id="t20" style="left:981px;top:83.84px;font-size:12px;color:#1a1a8c;transform:scaleX(1.0852);">Update</div>
<div class="t" id="t21" style="left:1037px;top:83.84px;font-size:12px;color:#1a1a8c;transform:scaleX(0.9909);">License</div>
<div class="t" id="t22" style="left:1095px;top:83.84px;font-size:12px;color:#1a1a8c;transform:scaleX(1.0937);">Help</div>
<div class="t" id="t23" style="left:1412px;top:61.00px;font-size:13px;color:#1a1a8c;transform:scaleX(0.9559);">Licensed ENERCALC User, KW-06000215</div>
<div class="t" id="t24" style="left:10px;top:116.76px;font-size:18px;color:#1010a0;transform:scaleX(1.0303);">Projects</div>
<div class="t" id="t25" style="left:102px;top:116.76px;font-size:18px;color:#1010a0;transform:scaleX(1.0524);">Project Manager</div>
<div class="t" id="t26" style="left:267px;top:114.76px;font-size:18px;color:#1010a0;transform:scaleX(1.0579);">Current Calculation</div>
<div class="t" id="t27" style="left:154px;top:148.22px;font-size:21px;color:#fff;font-weight:bold;transform:scaleX(0.9837);">Wood Beam</div>
<div class="t" id="t28" style="left:492px;top:149.73px;font-size:14.5px;color:#108a10;font-weight:bold;transform:scaleX(0.8732);"><u>P</u>RINT</div>
<div class="t" id="t29" style="left:547px;top:149.73px;font-size:14.5px;color:#8b0000;font-weight:bold;transform:scaleX(0.8108);">CAN<u>C</u>EL</div>
<div class="t" id="t30" style="left:612px;top:149.73px;font-size:14.5px;color:#000080;font-weight:bold;transform:scaleX(0.8470);">CLO<u>N</u>E</div>
<div class="t" id="t31" style="left:676px;top:149.73px;font-size:14.5px;color:#000080;font-weight:bold;transform:scaleX(0.8329);">S<u>A</u>VE</div>
<div class="t" id="t32" style="left:728px;top:150.30px;font-size:15px;color:#006400;font-weight:bold;transform:scaleX(0.9223);"><u>S</u>AVE &amp; CLOSE</div>
<div class="t" id="t33" style="left:144px;top:193.69px;font-size:11px;color:#0a0a80;font-weight:bold;transform:scaleX(1.0064);">10.0 ft</div>
<div class="t" id="t34" style="left:12px;top:264.96px;font-size:9.5px;color:#fffff0;font-weight:bold;transform:scaleX(0.9509);">Click on  +/-  to Add, Delete Spans</div>
<div class="t" id="t35" style="left:361px;top:264.96px;font-size:9.5px;color:#fffff0;font-weight:bold;transform:scaleX(0.9159);">Click on Span To Select</div>
<div class="t" id="t36" style="left:711px;top:264.96px;font-size:9.5px;color:#fffff0;font-weight:bold;transform:scaleX(0.9763);">Click on Support to Modify</div>
<div class="t" id="t37" style="left:9.5px;top:287.30px;font-size:15px;color:#111;transform:scaleX(0.9368);">General</div>
<div class="t" id="t38" style="left:91px;top:289.30px;font-size:15px;color:#111;transform:scaleX(0.9628);">Beam Span Data</div>
<div class="t" id="t39" style="left:231.5px;top:289.30px;font-size:15px;color:#111;transform:scaleX(0.9366);">Span Loads</div>
<div class="t" id="t40" style="left:337.5px;top:289.30px;font-size:15px;color:#111;transform:scaleX(0.9667);">Loads All Spans</div>
<div class="t" id="t41" style="left:472px;top:289.30px;font-size:15px;color:#111;transform:scaleX(0.9758);">Load Combs</div>
<div class="t" id="t42" style="left:13.5px;top:316.07px;font-size:13.5px;color:#008000;font-weight:bold;transform:scaleX(0.9104);"><u>DESCRIPTION</u></div>
<div class="t" id="t43" style="left:24.5px;top:340.00px;font-size:13px;color:#1a1a9a;transform:scaleX(1.1156);">--None--</div>
<div class="t" id="t44" style="left:13.5px;top:406.80px;font-size:15px;color:#008000;font-weight:bold;transform:scaleX(0.9953);"><u>Design Method</u></div>
<div class="t" id="t45" style="left:197.5px;top:412.30px;font-size:15px;color:#1a1a9a;transform:scaleX(0.9397);"><u>A</u>SD</div>
<div class="t" id="t46" style="left:341.5px;top:411.30px;font-size:15px;color:#1a1a9a;transform:scaleX(0.8680);"><u>L</u>RFD</div>
<div class="t" id="t47" style="left:523px;top:322.07px;font-size:13.5px;color:#008000;font-weight:bold;transform:scaleX(0.9753);"><u>Change Beam Material To</u></div>
<div class="t" id="t48" style="left:581px;top:347.88px;font-size:15.5px;color:#000;font-weight:bold;font-style:italic;transform:scaleX(0.9444);-webkit-text-stroke:0.35px #000;">Steel</div>
<div class="t" id="t49" style="left:724.5px;top:347.88px;font-size:15.5px;color:#000;font-weight:bold;font-style:italic;transform:scaleX(0.9377);-webkit-text-stroke:0.35px #000;">Concrete</div>
<div class="t" id="t50" style="left:13.5px;top:456.23px;font-size:14.5px;color:#008000;font-weight:bold;transform:scaleX(1.0219);"><u>Wood Material Selection</u></div>
<div class="t" id="t51" style="left:27.5px;top:478.00px;font-size:13px;color:#111;transform:scaleX(1.0049);">Wood Species</div>
<div class="t" id="t52" style="left:27.5px;top:505.50px;font-size:13px;color:#111;transform:scaleX(1.0345);">Wood Grade</div>
<div class="t" id="t53" style="left:138.5px;top:480.00px;font-size:13px;color:#1a1a9a;transform:scaleX(1.0450);">Douglas Fir-Larch (North)</div>
<div class="t" id="t54" style="left:138.5px;top:507.50px;font-size:13px;color:#1a1a9a;transform:scaleX(1.0644);">No. 1/No. 2</div>
<div class="t" id="t55" style="left:524.5px;top:494.38px;font-size:15.5px;color:#111;transform:scaleX(0.9594);">Select from Database</div>
<div class="t" id="t56" style="left:27.5px;top:540.00px;font-size:13px;color:#111;">Fb +</div>
<div class="t" id="t57" style="top:542.00px;font-size:13px;color:#1a1a9a;right:1430px;">850</div>
<div class="t" id="t58" style="left:285.5px;top:539.50px;font-size:13px;color:#111;transform:scaleX(1.0226);">psi</div>
<div class="t" id="t59" style="left:27.5px;top:566.50px;font-size:13px;color:#111;">Fb -</div>
<div class="t" id="t60" style="top:568.00px;font-size:13px;color:#1a1a9a;right:1430px;">850</div>
<div class="t" id="t61" style="left:285.5px;top:565.50px;font-size:13px;color:#111;transform:scaleX(1.0226);">psi</div>
<div class="t" id="t62" style="left:27.5px;top:594.00px;font-size:13px;color:#111;">Fc - Prll</div>
<div class="t" id="t63" style="top:595.50px;font-size:13px;color:#1a1a9a;right:1430px;">1400</div>
<div class="t" id="t64" style="left:285.5px;top:593.00px;font-size:13px;color:#111;transform:scaleX(1.0226);">psi</div>
<div class="t" id="t65" style="left:27.5px;top:621.00px;font-size:13px;color:#111;">Fc - Perp</div>
<div class="t" id="t66" style="top:622.50px;font-size:13px;color:#1a1a9a;right:1430px;">625</div>
<div class="t" id="t67" style="left:285.5px;top:620.00px;font-size:13px;color:#111;transform:scaleX(1.0226);">psi</div>
<div class="t" id="t68" style="left:27.5px;top:654.00px;font-size:13px;color:#111;">E : Modulus of Elasticity</div>
<div class="t" id="t69" style="left:45px;top:675.50px;font-size:13px;color:#111;transform:scaleX(1.0077);">Ebend- xx</div>
<div class="t" id="t70" style="left:45px;top:703.00px;font-size:13px;color:#111;transform:scaleX(1.0109);">Eminbend - xx</div>
<div class="t" id="t71" style="top:677.00px;font-size:13px;color:#1a1a9a;right:1430px;">1600</div>
<div class="t" id="t72" style="top:705.00px;font-size:13px;color:#1a1a9a;right:1430px;">580</div>
<div class="t" id="t73" style="left:285.5px;top:675.00px;font-size:13px;color:#111;transform:scaleX(0.9440);">ksi</div>
<div class="t" id="t74" style="left:285.5px;top:703.00px;font-size:13px;color:#111;transform:scaleX(0.9440);">ksi</div>
<div class="t" id="t75" style="left:390.5px;top:540.00px;font-size:13px;color:#111;">Fv</div>
<div class="t" id="t76" style="top:542.00px;font-size:13px;color:#1a1a9a;right:1064px;">180</div>
<div class="t" id="t77" style="left:650px;top:539.50px;font-size:13px;color:#111;transform:scaleX(1.0827);">psi</div>
<div class="t" id="t78" style="left:390.5px;top:566.00px;font-size:13px;color:#111;">Ft</div>
<div class="t" id="t79" style="top:568.00px;font-size:13px;color:#1a1a9a;right:1064px;">500</div>
<div class="t" id="t80" style="left:650px;top:565.50px;font-size:13px;color:#111;transform:scaleX(1.0827);">psi</div>
<div class="t" id="t81" style="left:390.5px;top:594.00px;font-size:13px;color:#111;">Density</div>
<div class="t" id="t82" style="top:595.50px;font-size:13px;color:#1a1a9a;right:1064px;">30.59</div>
<div class="t" id="t83" style="left:650px;top:593.50px;font-size:13px;color:#111;transform:scaleX(1.0378);">pcf</div>
<div class="t" id="t84" style="left:392.5px;top:622.00px;font-size:13px;color:#111;transform:scaleX(1.0220);">Calc Shear at 'd' from support ?</div>
<div class="t" id="t85" style="left:13px;top:728.73px;font-size:14.5px;color:#008000;font-weight:bold;transform:scaleX(0.9846);"><u>Compression Edge Lateral Bracing</u></div>
<div class="t" id="t86" style="left:60px;top:762.57px;font-size:13.5px;color:#1a1a9a;transform:scaleX(0.9413);">Compression Side Fully <u>B</u>raced</div>
<div class="t" id="t87" style="left:87.5px;top:799.07px;font-size:13.5px;color:#1a1a9a;transform:scaleX(0.9611);">Set <u>U</u>niform Spacing</div>
<div class="t" id="t88" style="left:420.5px;top:762.57px;font-size:13.5px;color:#1a1a9a;transform:scaleX(0.9517);">D<u>e</u>fine Bracing Span-by-Span</div>
<div class="t" id="t89" style="left:442.5px;top:799.07px;font-size:13.5px;color:#1a1a9a;transform:scaleX(0.9706);">Completely Unbraced</div>
<div class="t" id="t90" style="left:855px;top:146.16px;font-size:12.8px;color:#1a1a9a;transform:scaleX(1.0335);">Done, Time :  0.020sec</div>
<div class="t" id="t91" style="left:1489.5px;top:139.11px;font-size:10.5px;color:#111;transform:scaleX(0.9019);">IBC 2018, ASCE 7-16, CBC 2019, AISC 360-</div>
<div class="t" id="t92" style="left:1492.5px;top:152.11px;font-size:10.5px;color:#111;transform:scaleX(0.9410);">16, NDS 2018, ACI 318-14, TMS 402-16 |</div>
<div class="t" id="t93" style="left:851.5px;top:188.73px;font-size:14.5px;color:#111;transform:scaleX(1.0127);">Calculations</div>
<div class="t" id="t94" style="left:961px;top:190.23px;font-size:14.5px;color:#111;transform:scaleX(1.0244);">2D</div>
<div class="t" id="t95" style="left:1010px;top:190.23px;font-size:14.5px;color:#111;transform:scaleX(1.0402);">Diagram</div>
<div class="t" id="t96" style="left:1098px;top:190.23px;font-size:14.5px;color:#111;transform:scaleX(1.0244);">3D</div>
<div class="t" id="t97" style="left:858px;top:223.42px;font-size:12.5px;color:#111;transform:scaleX(1.0036);">Summary Results</div>
<div class="t" id="t98" style="left:967.5px;top:224.92px;font-size:12.5px;color:#111;transform:scaleX(1.0467);">Max. Combinations</div>
<div class="t" id="t99" style="left:1089.5px;top:224.92px;font-size:12.5px;color:#111;transform:scaleX(1.0392);">M-V-D Summary</div>
<div class="t" id="t100" style="left:1196px;top:224.92px;font-size:12.5px;color:#111;transform:scaleX(1.0404);">Support Reactions</div>
<div class="t" id="t101" style="left:1508px;top:217.57px;font-size:13.5px;color:#fff;font-weight:bold;transform:scaleX(0.9418);">Design OK</div>
<div class="t" id="t102" style="left:898px;top:252.30px;font-size:15px;color:#008000;font-weight:bold;transform:scaleX(0.9673);">Max Bending Stress Ratio</div>
<div class="t" id="t103" style="left:1216px;top:252.30px;font-size:15px;color:#008000;font-weight:bold;transform:scaleX(1.1985);">0</div>
<div class="t" id="t104" style="left:1227.5px;top:254.84px;font-size:12px;color:#111;transform:scaleX(0.8993);">: 1</div>
<div class="t" id="t105" style="left:1294.5px;top:252.30px;font-size:15px;color:#008000;font-weight:bold;transform:scaleX(0.9684);">Max Shear Stress Ratio =</div>
<div class="t" id="t106" style="left:1624.5px;top:252.30px;font-size:15px;color:#008000;font-weight:bold;transform:scaleX(1.1985);">0</div>
<div class="t" id="t107" style="left:1636px;top:254.84px;font-size:12px;color:#111;transform:scaleX(0.8993);">: 1</div>
<div class="t" id="t108" style="left:904.5px;top:271.92px;font-size:12.5px;color:#111;transform:scaleX(1.0498);">Section used for this span</div>
<div class="t" id="t109" style="left:904.5px;top:300.42px;font-size:12.5px;color:#111;transform:scaleX(1.0735);">fb : Actual =</div>
<div class="t" id="t110" style="left:904.5px;top:319.42px;font-size:12.5px;color:#111;transform:scaleX(1.0224);">FB : Allowable =</div>
<div class="t" id="t111" style="left:904.5px;top:337.42px;font-size:12.5px;color:#111;transform:scaleX(1.0447);">Ld Comb</div>
<div class="t" id="t112" style="left:1228px;top:300.42px;font-size:12.5px;color:#111;transform:scaleX(1.0635);">psi</div>
<div class="t" id="t113" style="left:1228px;top:319.42px;font-size:12.5px;color:#111;transform:scaleX(1.0635);">psi</div>
<div class="t" id="t114" style="left:904.5px;top:373.42px;font-size:12.5px;color:#111;transform:scaleX(1.0554);">Location of maximum on span</div>
<div class="t" id="t115" style="left:904.5px;top:391.92px;font-size:12.5px;color:#111;transform:scaleX(1.0395);">Span # where maximum occurs</div>
<div class="t" id="t116" style="left:1314px;top:271.92px;font-size:12.5px;color:#111;transform:scaleX(1.0498);">Section used for this span</div>
<div class="t" id="t117" style="left:1314px;top:300.42px;font-size:12.5px;color:#111;transform:scaleX(1.0851);">fv : Actual =</div>
<div class="t" id="t118" style="left:1314px;top:319.42px;font-size:12.5px;color:#111;transform:scaleX(1.0468);">Fv : Allowable =</div>
<div class="t" id="t119" style="left:1314px;top:337.42px;font-size:12.5px;color:#111;transform:scaleX(1.0447);">Ld Comb</div>
<div class="t" id="t120" style="left:1636px;top:300.42px;font-size:12.5px;color:#111;transform:scaleX(1.0635);">psi</div>
<div class="t" id="t121" style="left:1636px;top:319.42px;font-size:12.5px;color:#111;transform:scaleX(1.0635);">psi</div>
<div class="t" id="t122" style="left:1314px;top:373.42px;font-size:12.5px;color:#111;transform:scaleX(1.0554);">Location of maximum on span</div>
<div class="t" id="t123" style="left:1314px;top:391.92px;font-size:12.5px;color:#111;transform:scaleX(1.0395);">Span # where maximum occurs</div>
<div class="t" id="t124" style="left:1218px;top:373.42px;font-size:12.5px;color:#1a1a9a;">0</div>
<div class="t" id="t125" style="left:1227.5px;top:373.42px;font-size:12.5px;color:#111;">ft</div>
<div class="t" id="t126" style="left:1219px;top:391.92px;font-size:12.5px;color:#1a1a9a;">1</div>
<div class="t" id="t127" style="left:1625px;top:373.42px;font-size:12.5px;color:#1a1a9a;">0</div>
<div class="t" id="t128" style="left:1634.5px;top:373.42px;font-size:12.5px;color:#111;">ft</div>
<div class="t" id="t129" style="left:1626px;top:391.92px;font-size:12.5px;color:#1a1a9a;">1</div>
<div class="t" id="t130" style="left:898px;top:441.26px;font-size:14.7px;color:#008000;font-weight:bold;">Deflection Ratios</div>
<div class="t" id="t131" style="left:917px;top:461.42px;font-size:12.5px;color:#111;transform:scaleX(1.0353);">Transient Load Deflection</div>
<div class="t" id="t132" style="left:951.5px;top:477.92px;font-size:12.5px;color:#111;transform:scaleX(1.0448);">Max Downward</div>
<div class="t" id="t133" style="left:1170.5px;top:478.42px;font-size:12.5px;color:#111;">in</div>
<div class="t" id="t134" style="left:1240.5px;top:474.42px;font-size:12.5px;color:#111;transform:scaleX(1.0508);">Ratio =</div>
<div class="t" id="t135" style="left:1350.5px;top:473.42px;font-size:12.5px;color:#111;transform:scaleX(1.0714);">&gt;=360</div>
<div class="t" id="t136" style="left:951.5px;top:513.92px;font-size:12.5px;color:#111;transform:scaleX(1.0546);">Max Upward</div>
<div class="t" id="t137" style="left:1170.5px;top:513.92px;font-size:12.5px;color:#111;">in</div>
<div class="t" id="t138" style="left:1240.5px;top:513.42px;font-size:12.5px;color:#111;transform:scaleX(1.0508);">Ratio =</div>
<div class="t" id="t139" style="left:1350.5px;top:513.42px;font-size:12.5px;color:#111;transform:scaleX(1.0714);">&gt;=360</div>
<div class="t" id="t140" style="left:917px;top:555.42px;font-size:12.5px;color:#111;transform:scaleX(1.0647);">Total Deflection</div>
<div class="t" id="t141" style="left:951.5px;top:572.42px;font-size:12.5px;color:#111;transform:scaleX(1.0448);">Max Downward</div>
<div class="t" id="t142" style="left:1170.5px;top:572.42px;font-size:12.5px;color:#111;">in</div>
<div class="t" id="t143" style="left:1240.5px;top:572.92px;font-size:12.5px;color:#111;transform:scaleX(1.0508);">Ratio =</div>
<div class="t" id="t144" style="left:1350.5px;top:572.92px;font-size:12.5px;color:#111;transform:scaleX(1.0714);">&gt;=180</div>
<div class="t" id="t145" style="left:951.5px;top:608.92px;font-size:12.5px;color:#111;transform:scaleX(1.0546);">Max Upward</div>
<div class="t" id="t146" style="left:1170.5px;top:608.92px;font-size:12.5px;color:#111;">in</div>
<div class="t" id="t147" style="left:1240.5px;top:609.42px;font-size:12.5px;color:#111;transform:scaleX(1.0508);">Ratio =</div>
<div class="t" id="t148" style="left:1350.5px;top:609.42px;font-size:12.5px;color:#111;transform:scaleX(1.0714);">&gt;=180</div>
<div class="t" id="t149" style="left:903px;top:653.23px;font-size:14.5px;color:#008000;font-weight:bold;transform:scaleX(0.9902);">Extreme Reactions  ( service,  kips )</div>
<div class="t" id="t150" style="left:1027.5px;top:673.42px;font-size:12.5px;color:#111;font-weight:bold;">D</div>
<div class="t" id="t151" style="left:1108.5px;top:673.42px;font-size:12.5px;color:#111;font-weight:bold;">Lr</div>
<div class="t" id="t152" style="left:1188.5px;top:673.42px;font-size:12.5px;color:#111;font-weight:bold;">L</div>
<div class="t" id="t153" style="left:1265px;top:673.42px;font-size:12.5px;color:#111;font-weight:bold;">S</div>
<div class="t" id="t154" style="left:1339px;top:673.42px;font-size:12.5px;color:#111;font-weight:bold;">W</div>
<div class="t" id="t155" style="left:1419.5px;top:673.42px;font-size:12.5px;color:#111;font-weight:bold;">E</div>
<div class="t" id="t156" style="left:1493.5px;top:673.42px;font-size:12.5px;color:#111;font-weight:bold;">H</div>
<div class="t" id="t157" style="left:912px;top:694.42px;font-size:12.5px;color:#111;transform:scaleX(1.0626);">Support #1</div>
<div class="t" id="t158" style="left:912px;top:716.42px;font-size:12.5px;color:#111;transform:scaleX(1.0626);">Support #2</div>
</body></html>
